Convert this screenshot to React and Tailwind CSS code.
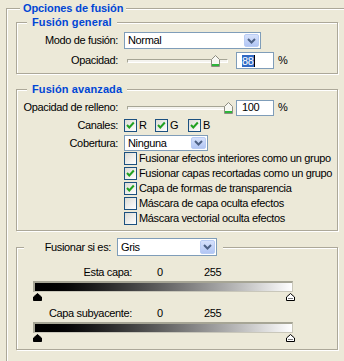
import React from "react";

const etched =
  "border border-[#ACA899] shadow-[inset_1px_1px_0_#fff,1px_1px_0_#fff]";

const Chevron = () => (
  <svg width="9" height="6" viewBox="0 0 9 6">
    <polyline
      points="1,1 4.5,4.5 8,1"
      fill="none"
      stroke="#4D6185"
      strokeWidth="2"
    />
  </svg>
);

const Select = ({ value, className }) => (
  <div
    className={`flex items-center bg-white border border-[#7F9DB9] ${className}`}
  >
    <span className="flex-1 pl-[3px] leading-none">{value}</span>
    <span className="flex items-center justify-center w-[15px] h-[calc(100%-2px)] mr-[1px] rounded-[2px] border border-[#B9CCF4] bg-linear-to-b from-[#D6E1FB] to-[#B2C6F4]">
      <Chevron />
    </span>
  </div>
);

const Check = ({ checked }) => (
  <span className="flex items-center justify-center w-[13px] h-[13px] shrink-0 border border-[#1C5180] bg-linear-to-br from-[#DCDBD5] to-white">
    {checked && (
      <svg width="11" height="11" viewBox="0 0 11 11">
        <polyline
          points="2,5 4.3,7.5 8.8,2.5"
          fill="none"
          stroke="#21A121"
          strokeWidth="2"
        />
      </svg>
    )}
  </span>
);

const SliderThumb = () => (
  <svg width="9" height="12" viewBox="0 0 9 12">
    <path
      d="M0.5 11.5 V4.5 L4.5 0.5 L8.5 4.5 V11.5 Z"
      fill="#F7F7F2"
      stroke="#8C8C80"
    />
    <rect x="1" y="9" width="7" height="2" fill="#2DB53A" />
  </svg>
);

const Slider = ({ pos }) => (
  <div className="relative w-[101px] h-[12px] ml-[9px] flex items-center">
    <div className="w-full h-[4px] border border-[#A6A595] border-b-white border-r-white bg-[#F4F3EE]" />
    <div className="absolute top-0" style={{ left: pos }}>
      <SliderThumb />
    </div>
  </div>
);

const BarThumb = ({ dark }) => (
  <svg width="9" height="8" viewBox="0 0 9 8">
    <path
      d="M0.5 7.5 V4 L4.5 0.5 L8.5 4 V7.5 Z"
      fill={dark ? "#000" : "#fff"}
      stroke="#000"
    />
    {!dark && <rect x="2" y="5" width="5" height="1" fill="#7a7a7a" />}
  </svg>
);

const Group = ({ title, titleLeft, children, className }) => (
  <div className={`relative w-[322px] ${etched} ${className}`}>
    {title && (
      <span
        className="absolute -top-[7px] px-[5px] bg-[#ECE9D8] font-bold tracking-[0.1px] text-[#0046D5] leading-[13px] whitespace-nowrap"
        style={{ left: titleLeft }}
      >
        {title}
      </span>
    )}
    {children}
  </div>
);

const Label = ({ children, w = "w-[101px]" }) => (
  <span className={`${w} text-right shrink-0 whitespace-nowrap`}>
    {children}
  </span>
);

const checks = [
  ["Fusionar efectos interiores como un grupo", false],
  ["Fusionar capas recortadas como un grupo", true],
  ["Capa de formas de transparencia", true],
  ["Máscara de capa oculta efectos", false],
  ["Máscara vectorial oculta efectos", false],
];

const Range = ({ label }) => (
  <>
    <div className="flex items-center h-[13px] leading-none">
      <Label w="w-[115px]">{label}</Label>
      <span className="ml-[25px] w-[47px]">0</span>
      <span>255</span>
    </div>
    <div className="ml-[16px] mt-[2px] w-[260px] h-[11px] border-t-2 border-l-2 border-[#A6A595] border-r border-b border-r-[#C9C7BA] border-b-[#C9C7BA] bg-linear-to-r from-black to-white" />
    <div className="ml-[16px] mt-[1px] w-[262px] h-[8px] flex justify-between">
      <BarThumb dark />
      <BarThumb />
    </div>
  </>
);

export default function App() {
  return (
    <div className="w-[344px] h-[361px] overflow-hidden bg-[#ECE9D8] pt-[8px] pl-[6px] text-[11px] tracking-[-0.35px] text-black [font-family:'Liberation_Sans',Arial,sans-serif]">
      <div className={`relative w-[360px] h-[400px] pt-[13px] pl-[9px] ${etched}`}>
        <span className="absolute -top-[7px] left-[13px] px-[3px] bg-[#ECE9D8] font-bold tracking-[-0.1px] text-[#0046D5] leading-[13px]">
          Opciones de fusión
        </span>

        <Group title="Fusión general" titleLeft="10px" className="h-[52px]">
          <div className="flex items-center h-[17px] mt-[9px]">
            <Label>Modo de fusión:</Label>
            <Select value="Normal" className="ml-[6px] w-[137px] h-[17px]" />
          </div>
          <div className="flex items-center h-[17px] mt-[3px]">
            <Label>Opacidad:</Label>
            <Slider pos="84px" />
            <div className="ml-[8px] w-[38px] h-[17px] flex items-center pl-[5px] bg-white border border-[#7F9DB9]">
              <span className="bg-[#316AC5] text-white leading-[12px]">88</span>
              <span className="w-[1px] h-[12px] bg-black" />
            </div>
            <span className="ml-[4px]">%</span>
          </div>
        </Group>

        <Group
          title="Fusión avanzada"
          titleLeft="10px"
          className="h-[142px] mt-[15px]"
        >
          <div className="flex items-center h-[17px] mt-[9px]">
            <Label>Opacidad de relleno:</Label>
            <Slider pos="97px" />
            <div className="ml-[8px] w-[38px] h-[16px] flex items-center pl-[5px] bg-white border border-[#7F9DB9]">
              100
            </div>
            <span className="ml-[4px]">%</span>
          </div>
          <div className="flex items-center h-[17px] mt-[1px]">
            <Label>Canales:</Label>
            <div className="ml-[6px] w-[31px] flex items-center">
              <Check checked />
              <span className="ml-[2px]">R</span>
            </div>
            <div className="w-[33px] flex items-center">
              <Check checked />
              <span className="ml-[2px]">G</span>
            </div>
            <div className="flex items-center">
              <Check checked />
              <span className="ml-[2px]">B</span>
            </div>
          </div>
          <div className="flex items-center h-[16px] mt-[1px]">
            <Label>Cobertura:</Label>
            <Select value="Ninguna" className="ml-[6px] w-[84px] h-[16px]" />
          </div>
          {checks.map(([text, on]) => (
            <div key={text} className="flex items-center h-[15px] pl-[107px]">
              <Check checked={on} />
              <span className="ml-[2px] whitespace-nowrap">{text}</span>
            </div>
          ))}
        </Group>

        <Group className="h-[103px] mt-[16px]">
          <div className="absolute left-[7px] -top-[10px] h-[18px] flex items-center bg-[#ECE9D8] pr-[6px]">
            <Label w="w-[87px]">Fusionar si es:</Label>
            <Select value="Gris" className="ml-[6px] w-[100px] h-[18px]" />
          </div>
          <div className="pt-[18px]">
            <Range label="Esta capa:" />
            <div className="mt-[6px]">
              <Range label="Capa subyacente:" />
            </div>
          </div>
        </Group>
      </div>
    </div>
  );
}
